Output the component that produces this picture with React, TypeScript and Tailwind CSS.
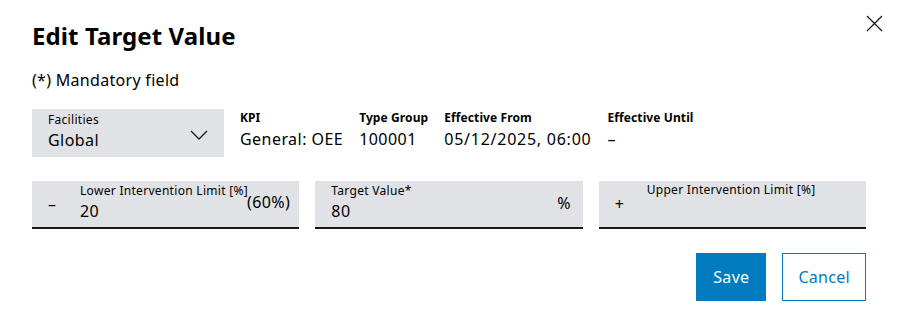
import React from "react";

function InfoCol({ label, value, wide }: { label: string; value: string; wide?: boolean }) {
  return (
    <div className="flex flex-col pt-[1px]">
      <span className="text-[12px] font-bold leading-4 tracking-[0.1px]">{label}</span>
      <span className={wide ? "text-[16px] leading-6 mt-[1px] tracking-[0.75px]" : "text-[16px] leading-6 mt-[1px] tracking-[0.45px]"}>
        {value}
      </span>
    </div>
  );
}

export default function App() {
  return (
    <div className="relative w-[898px] h-[333px] bg-white text-black px-8 pt-[20px] font-['Noto_Sans',sans-serif]">
      {/* close */}
      <button className="absolute right-[15px] top-[14px] w-[18px] h-[18px] flex items-center justify-center">
        <svg width="17" height="17" viewBox="0 0 17 17" fill="none" stroke="#1a1a1a" strokeWidth="1.3">
          <path d="M1 1 L16 16 M16 1 L1 16" />
        </svg>
      </button>

      <h1 className="text-[24px] font-bold leading-8 tracking-[0.1px]">Edit Target Value</h1>
      <p className="text-[16px] leading-6 mt-[16px] tracking-[0.3px]">(*) Mandatory field</p>

      {/* info row */}
      <div className="flex mt-[17px] h-12">
        <div className="w-[192px] h-12 bg-[#e0e2e5] flex items-center pl-4 pr-4 shrink-0">
          <div className="flex flex-col flex-1 -mt-[3px]">
            <span className="text-[12px] leading-4 tracking-[0.3px]">Facilities</span>
            <span className="text-[16px] leading-6 tracking-[0.45px]">Global</span>
          </div>
          <svg width="18" height="10" viewBox="0 0 18 10" fill="none" stroke="#1a1a1a" strokeWidth="1.3" className="mt-[3px]">
            <path d="M1 1 L9 9 L17 1" />
          </svg>
        </div>
        <div className="flex ml-4 gap-4">
          <InfoCol label="KPI" value="General: OEE" />
          <InfoCol label="Type Group" value="100001" />
          <InfoCol label="Effective From" value="05/12/2025, 06:00" wide />
          <InfoCol label="Effective Until" value="–" />
        </div>
      </div>

      {/* limits row */}
      <div className="grid grid-cols-3 gap-4 mt-6">
        <div className="h-12 bg-[#e0e2e5] border-b-2 border-[#1a1a1a] flex items-center pl-4 pr-[9px]">
          <span className="w-8 shrink-0 text-[16px]">–</span>
          <div className="flex flex-col flex-1 min-w-0 -mt-[3px]">
            <span className="text-[12px] leading-4 tracking-[0.3px] whitespace-nowrap">Lower Intervention Limit [%]</span>
            <span className="text-[16px] leading-6 tracking-[0.45px]">20</span>
          </div>
          <span className="text-[16px] -mt-[5px] tracking-[0.45px] shrink-0">(60%)</span>
        </div>
        <div className="h-12 bg-[#e0e2e5] border-b-2 border-[#1a1a1a] flex items-center pl-4 pr-3">
          <div className="flex flex-col flex-1 -mt-[3px]">
            <span className="text-[12px] leading-4 tracking-[0.3px]">Target Value*</span>
            <span className="text-[16px] leading-6 tracking-[0.45px]">80</span>
          </div>
          <span className="text-[16px] -mt-[2px]">%</span>
        </div>
        <div className="h-12 bg-[#e0e2e5] border-b-2 border-[#1a1a1a] flex items-center pl-4 pr-3">
          <span className="w-8 shrink-0 text-[16px]">+</span>
          <div className="flex flex-col flex-1 self-start pt-[1px]">
            <span className="text-[12px] leading-4 tracking-[0.3px] whitespace-nowrap">Upper Intervention Limit [%]</span>
          </div>
        </div>
      </div>

      {/* actions */}
      <div className="flex justify-end gap-4 mt-[24px]">
        <button className="h-12 px-[17px] bg-[#007bc0] text-white text-[16px] tracking-[0.3px]">Save</button>
        <button className="h-12 px-[15px] border border-[#007bc0] text-[#007bc0] text-[16px] bg-white tracking-[0.3px]">Cancel</button>
      </div>
    </div>
  );
}
